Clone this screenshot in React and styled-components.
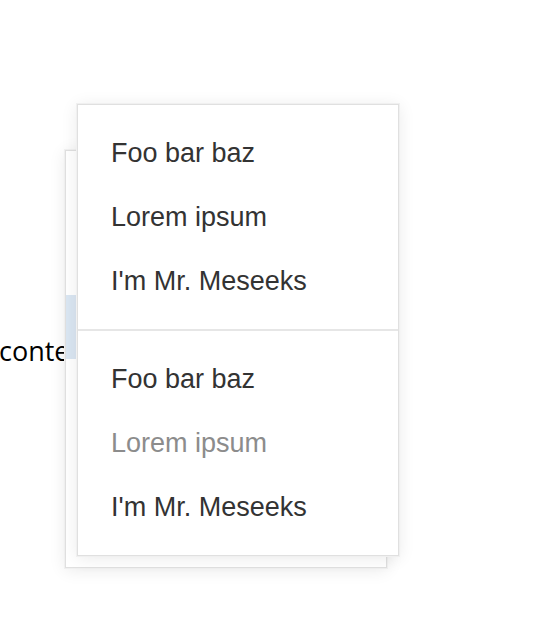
import React from "react";
import styled, { createGlobalStyle } from "styled-components";

const Global = createGlobalStyle`
  html, body { margin: 0; padding: 0; background: #fff; }
  body { font-family: "Liberation Sans", Arial, sans-serif; }
`;

const Page = styled.div`
  position: relative;
  width: 560px;
  height: 632px;
  overflow: hidden;
  background: #fff;
`;

const Content = styled.p`
  margin: 0 0 0 -1px;
  padding-top: 332px;
  font-family: "Open Sans", sans-serif;
  font-size: 27px;
  line-height: normal;
  color: #000;
`;

const Menu = styled.ul`
  position: absolute;
  left: ${(p) => p.$left}px;
  top: ${(p) => p.$top}px;
  width: 320px;
  margin: 0;
  padding: 0;
  list-style: none;
  background: #fff;
  border: 1px solid #e0e0e0;
  box-shadow: 0 0 0 1px #f0f0f0, 0 2px 16px rgba(0, 0, 0, 0.09);
`;

const Group = styled.li`
  padding: 16px 0;
  border-top: ${(p) => (p.$divided ? "2px solid #e6e6e6" : "none")};
`;

const Items = styled.ul`
  margin: 0;
  padding: 0;
  list-style: none;
`;

const Item = styled.li`
  height: 64px;
  line-height: 64px;
  padding-left: 33px;
  font-size: 27px;
  color: ${(p) => (p.$disabled ? "#8c8c8c" : "#333")};
  background: ${(p) => (p.$active ? "#dae6f2" : "transparent")};
  white-space: nowrap;
`;

const groups = [
  [
    { label: "Foo bar baz" },
    { label: "Lorem ipsum" },
    { label: "I'm Mr. Meseeks" },
  ],
  [
    { label: "Foo bar baz" },
    { label: "Lorem ipsum", disabled: true },
    { label: "I'm Mr. Meseeks" },
  ],
];

const backData = [
  [
    { label: "Foo bar baz" },
    { label: "Lorem ipsum" },
    { label: "I'm Mr. Meseeks" },
    { label: "Foo bar baz" },
    { label: "Lorem ipsum" },
    { label: "I'm Mr. Meseeks" },
  ],
];

function DropMenu({ left, top, data, activeIndex }) {
  return (
    <Menu $left={left} $top={top}>
      {data.map((g, gi) => (
        <Group key={gi} $divided={gi > 0}>
          <Items>
            {g.map((it, ii) => (
              <Item
                key={ii}
                $disabled={it.disabled}
                $active={gi === 0 && ii === activeIndex}
              >
                {it.label}
              </Item>
            ))}
          </Items>
        </Group>
      ))}
    </Menu>
  );
}

export default function App() {
  return (
    <Page>
      <Global />
      <Content>content</Content>
      <DropMenu left={65} top={150} data={backData} activeIndex={2} />
      <DropMenu left={77} top={104} data={groups} activeIndex={-1} />
    </Page>
  );
}
